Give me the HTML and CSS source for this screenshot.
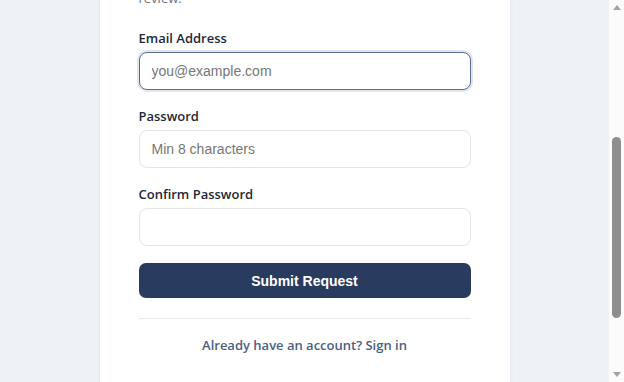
FILE: index.html
```html
<!DOCTYPE html>
<html lang="en">
<head>
    <meta charset="UTF-8">
    <meta name="viewport" content="width=device-width, initial-scale=1.0">
    <title>Request Access</title>
    <link rel="stylesheet" href="styles.css">
</head>
<body>

    <div class="window">
        <div class="scroller" id="scroller">
            <div class="page">
                <div class="card">
                    <div class="logo">
                        <svg width="28" height="28" viewBox="0 0 24 24" fill="none" stroke="#fff" stroke-width="2" stroke-linecap="round" stroke-linejoin="round">
                            <rect x="4" y="11" width="16" height="10" rx="2"></rect>
                            <path d="M8 11V7a4 4 0 0 1 8 0v4"></path>
                        </svg>
                    </div>
                    <h1>Request Access</h1>
                    <p class="intro">Fill in the form below to request an account. Every request is checked by an administrator, and you will get an email as soon as it has passed our<br>review.</p>

                    <form action="">
                        <div class="field" id="first-field">
                            <label for="email">Email Address</label>
                            <input type="text" id="email" class="focused" placeholder="you@example.com">
                        </div>
                        <div class="field">
                            <label for="password">Password</label>
                            <input type="password" id="password" placeholder="Min 8 characters">
                        </div>
                        <div class="field">
                            <label for="confirm">Confirm Password</label>
                            <input type="password" id="confirm">
                        </div>
                        <button type="submit" class="btn">Submit Request</button>
                    </form>

                    <div class="divider"></div>
                    <a href="#" class="signin">Already have an account? Sign in</a>
                </div>
            </div>
        </div>

        <!-- scrollbar of the page -->
        <div class="scrollbar">
            <div class="arrow up"></div>
            <div class="track">
                <div class="thumb"></div>
            </div>
            <div class="arrow down"></div>
        </div>
    </div>

    <script>
        var scroller = document.getElementById("scroller");
        var field = document.getElementById("first-field");
        scroller.scrollTop = field.offsetTop - 26;
    </script>
</body>
</html>
```

FILE: styles.css
```css
*{
    margin: 0;
    padding: 0;
    box-sizing: border-box;
}
html, body{
    height: 100%;
    overflow: hidden;
}
body{
    background: #eef2f7;
    font-family: "Open Sans", "Noto Sans", sans-serif;
    color: #1f2937;
}
.window{
    display: flex;
    height: 100vh;
}
.scroller{
    flex: 1;
    overflow-y: scroll;
    scrollbar-width: none;
}
.scroller::-webkit-scrollbar{
    display: none;
}
.scrollbar{
    width: 15px;
    background: #fbfbfb;
    display: flex;
    flex-direction: column;
    align-items: center;
}
.arrow{
    width: 0;
    height: 0;
    border-left: 4.5px solid transparent;
    border-right: 4.5px solid transparent;
}
.arrow.up{
    margin: 5px 0 5px;
    border-bottom: 5px solid #a3a3a3;
}
.arrow.down{
    margin: 5px 0 5px;
    border-top: 5px solid #a3a3a3;
}
.track{
    flex: 1;
    width: 100%;
    padding: 0 3px;
}
.thumb{
    margin-top: 122px;
    height: 181px;
    border-radius: 5px;
    background: #8e8e8e;
}
.page{
    padding: 40px 20px 88px;
}
.card{
    width: 410px;
    margin: 0 auto;
    background: #fff;
    padding: 40px 39px;
    box-shadow: 0 1px 4px rgba(30, 41, 59, 0.08);
}
.logo{
    width: 56px;
    height: 56px;
    border-radius: 12px;
    background: #293b5f;
    display: flex;
    align-items: center;
    justify-content: center;
    margin-bottom: 12px;
}
h1{
    font-size: 24px;
    line-height: 32px;
    margin-bottom: 8px;
}
.intro{
    font-size: 13px;
    line-height: 20px;
    color: #6b7280;
    margin-bottom: 18px;
}
.field{
    margin-bottom: 14px;
}
.field label{
    display: block;
    padding-top: 2px;
    font-size: 13px;
    line-height: 20px;
    font-weight: 600;
    color: #1f2937;
    margin-bottom: 4px;
}
.field input{
    display: block;
    width: 100%;
    height: 38px;
    padding: 0 12px;
    border: 1px solid #e1e4e9;
    border-radius: 8px;
    font-family: "Liberation Sans", Arial, sans-serif;
    font-size: 14px;
    color: #1f2937;
    outline: none;
}
.field input::placeholder{
    color: #777;
}
.field input.focused{
    border-color: #5b6d96;
    box-shadow: 0 0 0 2px rgba(91, 109, 150, 0.18);
}
.btn{
    display: block;
    width: 100%;
    height: 35px;
    margin-top: 17px;
    border: none;
    border-radius: 7px;
    background: #293b5f;
    color: #fff;
    font-family: "Liberation Sans", Arial, sans-serif;
    font-size: 14px;
    font-weight: bold;
}
.divider{
    height: 1px;
    background: #e8eaee;
    margin: 20px 0 16px;
}
.signin{
    display: block;
    text-align: center;
    font-size: 13px;
    line-height: 20px;
    font-weight: 600;
    color: #4b5f84;
    text-decoration: none;
}
```
